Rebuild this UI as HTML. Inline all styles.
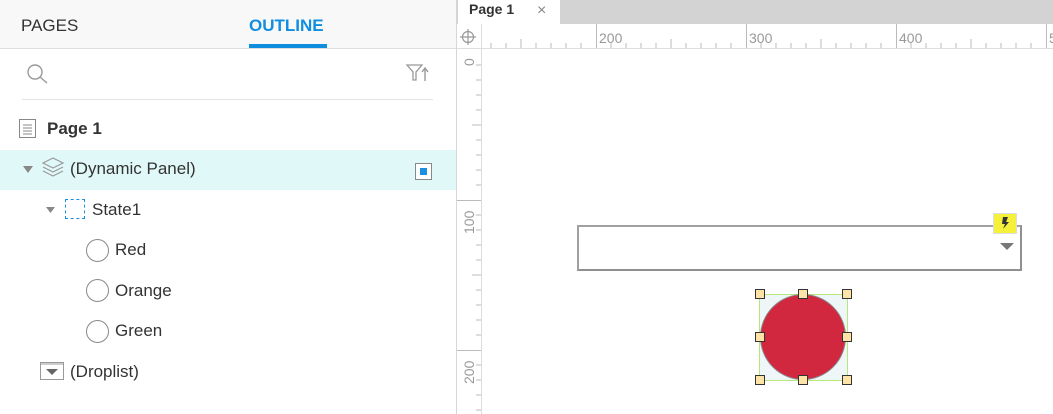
<!DOCTYPE html>
<html><head><style>
*{margin:0;padding:0;box-sizing:border-box}
body{width:1053px;height:414px;overflow:hidden;background:#fff;font-family:"Liberation Sans","DejaVu Sans",sans-serif;position:relative;color:#333}
.a{position:absolute}
.t{font-size:17px;color:#333;white-space:nowrap}
</style></head><body>
<!-- left panel -->
<div class="a" style="left:0;top:0;width:456px;height:49px;background:#f8f8f8;border-bottom:1px solid #ddd"></div>
<div class="a t" style="left:21px;top:16px;font-size:17px;color:#333">PAGES</div>
<div class="a t" style="left:249px;top:16px;font-size:17px;color:#0f8ee0;font-weight:bold">OUTLINE</div>
<div class="a" style="left:249px;top:44px;width:78px;height:4px;background:#0f8ee0"></div>
<div class="a" style="left:456px;top:0;width:1px;height:414px;background:#d6d6d6"></div>
<svg class="a" style="left:24px;top:62px" width="26" height="22"><circle cx="11" cy="10" r="7" fill="none" stroke="#999" stroke-width="1.4"/><line x1="16" y1="15" x2="23" y2="21" stroke="#999" stroke-width="1.4"/></svg>
<svg class="a" style="left:406px;top:63px" width="24" height="20"><path d="M1 2H16L10 9V17H7V9Z" fill="none" stroke="#999" stroke-width="1.3"/><path d="M19 18V6M16 9L19 5L22 9" fill="none" stroke="#999" stroke-width="1.4"/></svg>
<div class="a" style="left:22px;top:99px;width:411px;height:1px;background:#e2e2e2"></div>
<svg class="a" style="left:19px;top:119px" width="18" height="20"><rect x="0.5" y="0.5" width="16" height="18" fill="#fff" stroke="#888"/><path d="M4 6H13M4 9H13M4 12H13M4 15H13" stroke="#888"/></svg>
<div class="a t" style="left:47px;top:119px;font-weight:bold">Page 1</div>
<div class="a" style="left:0;top:150px;width:456px;height:40px;background:#e0f9f8"></div>
<svg class="a" style="left:22px;top:165px" width="12" height="10"><path d="M1 1H11L6 8Z" fill="#888"/></svg>
<svg class="a" style="left:41px;top:157px" width="24" height="22"><path d="M12 1L22 6L12 11L2 6Z" fill="none" stroke="#999" stroke-width="1.2"/><path d="M2 10L12 15L22 10M2 14L12 19L22 14" fill="none" stroke="#999" stroke-width="1.2"/></svg>
<div class="a t" style="left:70px;top:159px">(Dynamic Panel)</div>
<div class="a" style="left:415px;top:163px;width:17px;height:17px;border:1.5px solid #888;background:#fff"></div>
<div class="a" style="left:420px;top:168px;width:7px;height:7px;background:#1a8fe0"></div>
<svg class="a" style="left:45px;top:206px" width="12" height="10"><path d="M1 1H10L5.5 7Z" fill="#888"/></svg>
<div class="a" style="left:65px;top:199px;width:20px;height:20px;border:1.5px dashed #1a8fe0"></div>
<div class="a t" style="left:92px;top:200px">State1</div>
<div class="a" style="left:86px;top:239px;width:23px;height:23px;border:1.5px solid #888;border-radius:50%"></div>
<div class="a t" style="left:115px;top:240px">Red</div>
<div class="a" style="left:86px;top:279px;width:23px;height:23px;border:1.5px solid #888;border-radius:50%"></div>
<div class="a t" style="left:115px;top:281px">Orange</div>
<div class="a" style="left:86px;top:320px;width:23px;height:23px;border:1.5px solid #888;border-radius:50%"></div>
<div class="a t" style="left:115px;top:321px">Green</div>
<svg class="a" style="left:40px;top:362px" width="25" height="19"><rect x="0.5" y="0.5" width="23" height="17" fill="#fff" stroke="#999"/><rect x="1" y="1" width="22" height="2" fill="#ccc"/><path d="M6 7H18L12 13Z" fill="#666"/></svg>
<div class="a t" style="left:70px;top:362px">(Droplist)</div>
<!-- right -->
<div class="a" style="left:457px;top:0;width:596px;height:24px;background:#d3d3d3"></div>
<div class="a" style="left:458px;top:0;width:102px;height:24px;background:#fff"></div>
<div class="a" style="left:469px;top:1px;font-size:14px;font-weight:bold;color:#333">Page 1</div>
<div class="a" style="left:537px;top:2px;font-size:16px;color:#888">×</div>
<svg class="a" style="left:457px;top:24px" width="596" height="390">
<rect x="0" y="0" width="596" height="25" fill="#fff"/>
<line x1="0" y1="24.5" x2="596" y2="24.5" stroke="#ddd"/>
<line x1="24.5" y1="0" x2="24.5" y2="390" stroke="#ddd"/>
<circle cx="11" cy="13" r="5.5" fill="none" stroke="#999" stroke-width="1.2"/><path d="M11 5V21M3 13H19" stroke="#999" stroke-width="1.2"/>
<g stroke="#bbb" stroke-width="1">
<path d="M34 24V19M49 24V19M64 24V15M79 24V19M94 24V19M109 24V19M124 24V19M139.5 24V0M154 24V19M169 24V19M184 24V19M199 24V19M214 24V15M229 24V19M244 24V19M259 24V19M274 24V19M289.5 24V0M304 24V19M319 24V19M334 24V19M349 24V19M364 24V15M379 24V19M394 24V19M409 24V19M424 24V19M439.5 24V0M454 24V19M469 24V19M484 24V19M499 24V19M514 24V15M529 24V19M544 24V19M559 24V19M574 24V19M589.5 24V0"/>
<path d="M24 41H19M24 56H19M24 71H19M24 86H19M24 101H15M24 116H19M24 131H19M24 146H19M24 161H19M0 176.5H24M24 191H19M24 206H19M24 221H19M24 236H19M24 251H15M24 266H19M24 281H19M24 296H19M24 311H19M0 326.5H24M24 341H19M24 356H19M24 371H19M24 386H19"/>
</g>
<g fill="#999" font-size="14" font-family="Liberation Sans,sans-serif">
<text x="142" y="19">200</text><text x="292" y="19">300</text><text x="442" y="19">400</text><text x="592" y="19">5</text>
<text transform="translate(17,30) rotate(-90)" x="-12" y="0">0</text>
<text transform="translate(17,210) rotate(-90)" x="0" y="0">100</text>
<text transform="translate(17,360) rotate(-90)" x="0" y="0">200</text>
</g>
</svg>
<div class="a" style="left:577px;top:225px;width:445px;height:46px;border:2px solid #909090;border-top-color:#a0a0a0;border-left-color:#a0a0a0;background:#fff"></div>
<svg class="a" style="left:1000px;top:243px" width="14" height="9"><path d="M0 0H14L7 7Z" fill="#777"/></svg>
<div class="a" style="left:993px;top:213px;width:24px;height:21px;background:#f5f03a;border:1px solid #ddd"></div>
<svg class="a" style="left:997px;top:215px" width="16" height="16"><path d="M6 2H11L9 7H12L6 14L8 9H5Z" fill="#333"/></svg>
<div class="a" style="left:759px;top:294px;width:89px;height:87px;background:#eef6f8;border:1px solid #b5e87a"></div>
<div class="a" style="left:760px;top:294px;width:86px;height:86px;border-radius:50%;background:#d12840;border:1.5px solid #888"></div>
<div class="a" style="left:755px;top:289px;width:10px;height:10px;background:#fde4a6;border:1.5px solid #333"></div>
<div class="a" style="left:798px;top:289px;width:10px;height:10px;background:#fde4a6;border:1.5px solid #333"></div>
<div class="a" style="left:842px;top:289px;width:10px;height:10px;background:#fde4a6;border:1.5px solid #333"></div>
<div class="a" style="left:755px;top:332px;width:10px;height:10px;background:#fde4a6;border:1.5px solid #333"></div>
<div class="a" style="left:842px;top:332px;width:10px;height:10px;background:#fde4a6;border:1.5px solid #333"></div>
<div class="a" style="left:755px;top:375px;width:10px;height:10px;background:#fde4a6;border:1.5px solid #333"></div>
<div class="a" style="left:798px;top:375px;width:10px;height:10px;background:#fde4a6;border:1.5px solid #333"></div>
<div class="a" style="left:842px;top:375px;width:10px;height:10px;background:#fde4a6;border:1.5px solid #333"></div>
</body></html>
